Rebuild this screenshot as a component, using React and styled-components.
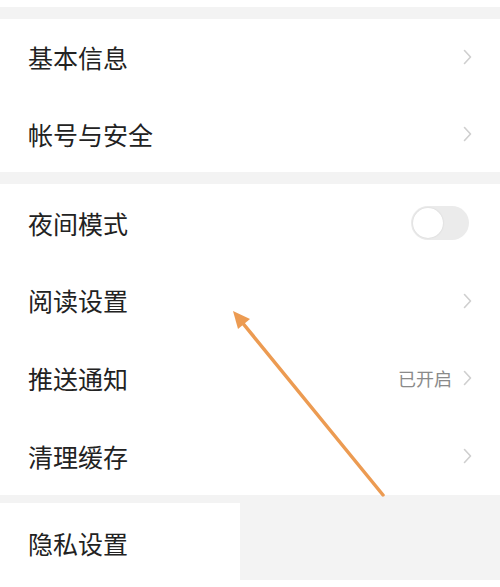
import React from "react";
import styled, { createGlobalStyle } from "styled-components";

const Global = createGlobalStyle`
  html, body { margin: 0; padding: 0; background: #ffffff; }
  body { font-family: "Noto Sans CJK SC", "Noto Sans", sans-serif; }
`;

const Page = styled.div`
  position: relative;
  width: 500px;
  height: 587px;
  background: #ffffff;
  overflow: hidden;
`;

const Screen = styled.div`
  margin-top: 7px;
  height: 573px;
  background: #f3f3f3;
  display: flex;
  flex-direction: column;
`;

const Group = styled.section`
  margin-top: ${(p) => p.$gap}px;
  background: ${(p) => (p.$partial ? "transparent" : "#ffffff")};
  display: flex;
  flex-direction: column;
`;

const Row = styled.div`
  height: ${(p) => p.$h}px;
  width: ${(p) => (p.$w ? `${p.$w}px` : "auto")};
  box-sizing: border-box;
  padding: 0 28px;
  background: #ffffff;
  display: flex;
  align-items: center;
  justify-content: space-between;
`;

const Label = styled.span`
  font-size: 25px;
  color: #222222;
  line-height: 1;
  letter-spacing: 0;
  padding-top: ${(p) => p.$dy || 0}px;
`;

const Right = styled.div`
  display: flex;
  align-items: center;
  gap: 11px;
`;

const Hint = styled.span`
  font-size: 18px;
  color: #8a8a8a;
  line-height: 1;
`;

const Chevron = () => (
  <svg width="9" height="16" viewBox="0 0 9 16" fill="none">
    <path d="M1.5 1.5 L7.5 8 L1.5 14.5" stroke="#cfcfcf" strokeWidth="1.6" strokeLinecap="round" strokeLinejoin="round" />
  </svg>
);

const Track = styled.div`
  width: 58px;
  height: 34px;
  margin-right: 3px;
  border-radius: 17px;
  background: #ebebeb;
  display: flex;
  align-items: center;
  padding: 2px;
  box-sizing: border-box;
`;

const Knob = styled.div`
  width: 30px;
  height: 30px;
  border-radius: 50%;
  background: #ffffff;
  box-shadow: 0 0 2px rgba(0, 0, 0, 0.12);
`;

const Arrow = styled.svg`
  position: absolute;
  left: 0;
  top: 0;
  pointer-events: none;
`;

export default function App() {
  return (
    <>
      <Global />
      <Page>
        <Screen>
          <Group $gap={12}>
            <Row $h={76.5}>
              <Label>基本信息</Label>
              <Chevron />
            </Row>
            <Row $h={76.5}>
              <Label $dy={2}>帐号与安全</Label>
              <Chevron />
            </Row>
          </Group>
          <Group $gap={12}>
            <Row $h={77.75}>
              <Label $dy={2}>夜间模式</Label>
              <Track>
                <Knob />
              </Track>
            </Row>
            <Row $h={77.75}>
              <Label>阅读设置</Label>
              <Chevron />
            </Row>
            <Row $h={77.75}>
              <Label>推送通知</Label>
              <Right>
                <Hint>已开启</Hint>
                <Chevron />
              </Right>
            </Row>
            <Row $h={77.75}>
              <Label>清理缓存</Label>
              <Chevron />
            </Row>
          </Group>
          <Group $gap={8} $partial>
            <Row $h={77} $w={240}>
              <Label $dy={4}>隐私设置</Label>
            </Row>
          </Group>
        </Screen>
        <Arrow width="500" height="587" viewBox="0 0 500 587">
          <line x1="383" y1="495" x2="241" y2="321" stroke="#ec9b52" strokeWidth="3.5" strokeLinecap="round" />
          <polygon points="233,311 250,319 238,329" fill="#ec9b52" />
        </Arrow>
      </Page>
    </>
  );
}
